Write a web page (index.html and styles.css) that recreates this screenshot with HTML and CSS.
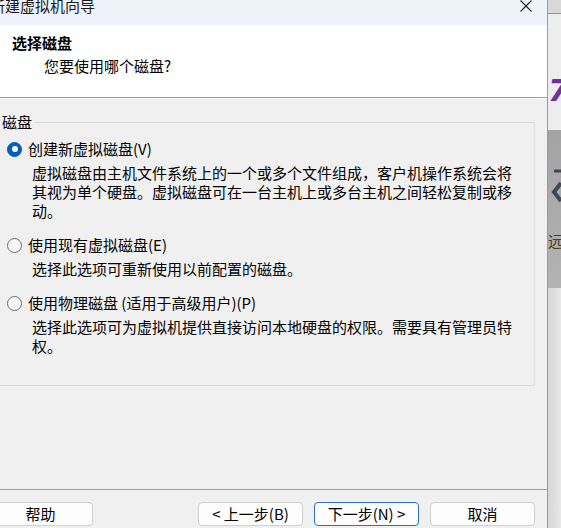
FILE: index.html
```html
<!DOCTYPE html>
<html lang="zh-CN">
<head>
    <meta charset="UTF-8">
    <meta name="viewport" content="width=device-width, initial-scale=1.0">
    <title>新建虚拟机向导</title>
    <link rel="stylesheet" href="styles.css">
</head>
<body>

    <div class="screen">
        <div class="wizard">
            <div class="titlebar">
                <span class="title">新建虚拟机向导</span>
                <svg class="close" width="12" height="12" viewBox="0 0 12 12">
                    <path d="M0.5 0.5 L11.5 11.5 M11.5 0.5 L0.5 11.5" stroke="#1a1a1a" stroke-width="1.1" fill="none"/>
                </svg>
            </div>

            <div class="header">
                <h1>选择磁盘</h1>
                <p>您要使用哪个磁盘?</p>
            </div>

            <div class="content">
                <fieldset class="group">
                    <legend>磁盘</legend>

                    <div class="option">
                        <label class="choice"><span class="radio checked"></span>创建新虚拟磁盘(V)</label>
                        <p class="desc">虚拟磁盘由主机文件系统上的一个或多个文件组成，客户机操作系统会将其视为单个硬盘。虚拟磁盘可在一台主机上或多台主机之间轻松复制或移动。</p>
                    </div>

                    <div class="option">
                        <label class="choice"><span class="radio"></span>使用现有虚拟磁盘(E)</label>
                        <p class="desc">选择此选项可重新使用以前配置的磁盘。</p>
                    </div>

                    <div class="option">
                        <label class="choice"><span class="radio"></span>使用物理磁盘 (适用于高级用户)(P)</label>
                        <p class="desc">选择此选项可为虚拟机提供直接访问本地硬盘的权限。需要具有管理员特权。</p>
                    </div>
                </fieldset>
            </div>

            <div class="footer">
                <button type="button" class="btn">帮助</button>
                <div class="nav">
                    <button type="button" class="btn">&lt; 上一步(B)</button>
                    <button type="button" class="btn primary">下一步(N) &gt;</button>
                    <button type="button" class="btn">取消</button>
                </div>
            </div>
        </div>

        <!-- window behind the dialog -->
        <div class="backdrop">
            <div class="bd-top"></div>
            <div class="bd-light"><span class="bd-seven">7</span></div>
            <div class="bd-dark">
                <svg class="bd-arrow" width="13" height="40" viewBox="0 0 13 40">
                    <path d="M6 2 H13" stroke="#3f4852" stroke-width="3" fill="none"/>
                    <path d="M13 14 L6 23 L13 32" stroke="#3f4852" stroke-width="4" fill="none"/>
                </svg>
                <span class="bd-text">远</span>
            </div>
            <div class="bd-rest"></div>
        </div>
    </div>

</body>
</html>
```

FILE: styles.css
```css
* {
    box-sizing: border-box;
}

body {
    margin: 0;
    width: 561px;
    height: 528px;
    overflow: hidden;
    font-family: "Noto Sans CJK SC", "Microsoft YaHei", sans-serif;
    font-size: 15px;
    color: #000;
    background-color: #e6e6e6;
}

.screen {
    display: flex;
    height: 528px;
    overflow: hidden;
}

.wizard {
    flex: none;
    width: 572px;
    margin-left: -24px;
    display: flex;
    flex-direction: column;
    background-color: #f0f0f0;
    border-right: 1px solid #9a9a9a;
}

.titlebar {
    height: 25px;
    display: flex;
    justify-content: space-between;
    align-items: flex-start;
    padding: 0 15px 0 14px;
    background-color: #eef2f9;
}

.title {
    line-height: 14px;
    margin-top: -1px;
    color: #1a1a1a;
}

.close {
    display: block;
}

.header {
    height: 73px;
    padding: 8px 0 0 36px;
    background-color: #fff;
    border-bottom: 1px solid #a0a0a0;
}

.header h1 {
    margin: 0;
    font-size: 15px;
    font-weight: bold;
    line-height: 20px;
}

.header p {
    margin: 3px 0 0 32px;
    line-height: 20px;
}

.content {
    flex: 1;
    border-top: 1px solid #fff;
    padding: 15px 12px 0;
}

.group {
    margin: 0;
    padding: 9px 0 30px 18px;
    border: 1px solid #dcdcdc;
    min-width: 0;
}

.group legend {
    margin-left: -7px;
    padding: 0 2px;
    line-height: 16px;
}

.option + .option {
    margin-top: 15px;
}

.choice {
    display: flex;
    align-items: center;
    height: 20px;
    line-height: 20px;
}

.radio {
    width: 15px;
    height: 15px;
    margin-right: 6px;
    border-radius: 50%;
    border: 1px solid #6b6b6b;
    background-color: #f7f7f7;
    display: flex;
    justify-content: center;
    align-items: center;
}

.radio.checked {
    border-color: #005fb8;
    background-color: #005fb8;
}

.radio.checked::after {
    content: '';
    width: 6px;
    height: 6px;
    border-radius: 50%;
    background-color: #fff;
}

.desc {
    margin: 4px 0 0 25px;
    width: 490px;
    line-height: 19px;
}

.footer {
    display: flex;
    justify-content: space-between;
    padding: 12px 12px 2px;
    border-top: 1px solid #a0a0a0;
}

.nav {
    display: flex;
    gap: 11px;
}

.btn {
    width: 105px;
    height: 24px;
    padding: 0;
    font-family: inherit;
    font-size: 15px;
    line-height: 22px;
    color: #000;
    background-color: #fdfdfd;
    border: 1px solid #d0d0d0;
    border-radius: 4px;
}

.btn.primary {
    border-color: #2b6fc6;
}

/* Background window strip */
.backdrop {
    flex: 1;
    display: flex;
    flex-direction: column;
    overflow: hidden;
}

.bd-top {
    height: 14px;
    background-color: #d8d8d8;
    border-bottom: 1px solid #7f96b0;
}

.bd-light {
    height: 116px;
    padding-top: 62px;
    background-color: #ededed;
    overflow: hidden;
}

.bd-seven {
    display: block;
    font-family: "DejaVu Sans", sans-serif;
    font-size: 30px;
    font-weight: bold;
    font-style: italic;
    line-height: 30px;
    color: #7030a0;
}

.bd-dark {
    height: 158px;
    padding-top: 39px;
    background: linear-gradient(180deg, #a3a3a3, #b3b3b3);
    overflow: hidden;
}

.bd-arrow {
    display: block;
}

.bd-text {
    display: block;
    margin-top: 24px;
    line-height: 16px;
    white-space: nowrap;
    color: #4a3e1c;
}

.bd-rest {
    flex: 1;
    background: linear-gradient(90deg, #d6d6d6, #e8e8e8);
}
```
